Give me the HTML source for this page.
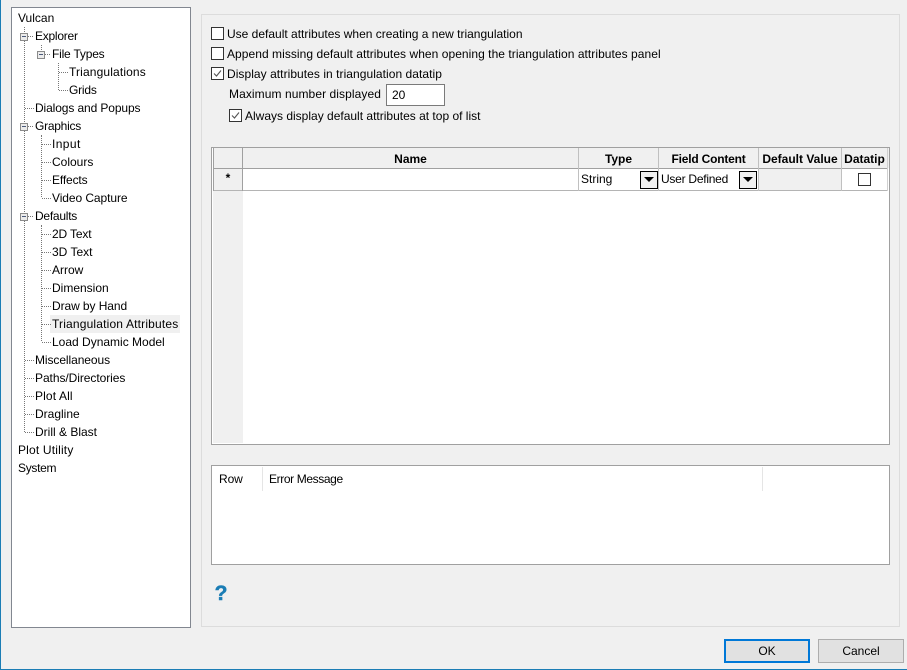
<!DOCTYPE html>
<html><head><meta charset="utf-8">
<style>
html,body{margin:0;padding:0}
body{width:907px;height:670px;position:relative;overflow:hidden;background:#f0f0f0;font-family:"Liberation Sans",sans-serif;font-size:12px;color:#000}
.a{position:absolute;box-sizing:border-box}
.t{position:absolute;white-space:nowrap;line-height:16px;height:16px}
.cb{position:absolute;width:13px;height:13px;box-sizing:border-box;border:1px solid #333;background:#fff}
.cb svg{position:absolute;left:0;top:0}
.v{position:absolute;width:1px;border-left:1px dotted #777}
.h{position:absolute;height:1px;border-top:1px dotted #777}
.ex{position:absolute;width:8px;height:8px;box-sizing:border-box;border:1px solid #8a8a8a;background:#ececec}
.ex:after{content:"";position:absolute;left:1px;top:2px;width:4px;height:1px;background:#4a5a7a}
.hd{font-weight:bold;text-align:center}
.dd{position:absolute;width:18px;height:18px;box-sizing:border-box;border:1px solid #000;background:#f0f0f0}
.dd:after{content:"";position:absolute;left:3px;top:5px;border-left:5px solid transparent;border-right:5px solid transparent;border-top:5px solid #000}
</style></head><body>
<div class="a" style="left:0;top:0;width:1px;height:670px;background:#1b7db5"></div>
<div class="a" style="left:0;top:669px;width:907px;height:1px;background:#1b7db5"></div>

<div class="a" style="left:11px;top:7px;width:180px;height:621px;background:#fff;border:1px solid #828790"></div>
<div class="a" style="left:50px;top:315px;width:130px;height:18px;background:#f0f0f0"></div>

<div class="v" style="left:24px;top:27px;height:405px"></div>
<div class="v" style="left:41px;top:45px;height:9px"></div>
<div class="v" style="left:41px;top:225px;height:116px"></div>
<div class="v" style="left:41px;top:135px;height:62px"></div>
<div class="v" style="left:58px;top:63px;height:27px"></div>
<div class="h" style="left:28px;top:36px;width:5px"></div>
<div class="h" style="left:45px;top:54px;width:5px"></div>
<div class="h" style="left:59px;top:72px;width:9px"></div>
<div class="h" style="left:59px;top:90px;width:9px"></div>
<div class="h" style="left:25px;top:108px;width:9px"></div>
<div class="h" style="left:28px;top:126px;width:5px"></div>
<div class="h" style="left:42px;top:144px;width:9px"></div>
<div class="h" style="left:42px;top:162px;width:9px"></div>
<div class="h" style="left:42px;top:180px;width:9px"></div>
<div class="h" style="left:42px;top:198px;width:9px"></div>
<div class="h" style="left:28px;top:216px;width:5px"></div>
<div class="h" style="left:42px;top:234px;width:9px"></div>
<div class="h" style="left:42px;top:252px;width:9px"></div>
<div class="h" style="left:42px;top:270px;width:9px"></div>
<div class="h" style="left:42px;top:288px;width:9px"></div>
<div class="h" style="left:42px;top:306px;width:9px"></div>
<div class="h" style="left:42px;top:324px;width:9px"></div>
<div class="h" style="left:42px;top:342px;width:9px"></div>
<div class="h" style="left:25px;top:360px;width:9px"></div>
<div class="h" style="left:25px;top:378px;width:9px"></div>
<div class="h" style="left:25px;top:396px;width:9px"></div>
<div class="h" style="left:25px;top:414px;width:9px"></div>
<div class="h" style="left:25px;top:432px;width:9px"></div>
<div class="ex" style="left:20px;top:33px"></div>
<div class="ex" style="left:37px;top:51px"></div>
<div class="ex" style="left:20px;top:123px"></div>
<div class="ex" style="left:20px;top:213px"></div>

<div class="t" style="left:18px;top:10px">Vulcan</div>
<div class="t" style="left:35px;top:28px;letter-spacing:-.25px">Explorer</div>
<div class="t" style="left:52px;top:46px;letter-spacing:-.2px">File Types</div>
<div class="t" style="left:69px;top:64px;letter-spacing:.14px">Triangulations</div>
<div class="t" style="left:69px;top:82px;letter-spacing:-.2px">Grids</div>
<div class="t" style="left:35px;top:100px;letter-spacing:-.11px">Dialogs and Popups</div>
<div class="t" style="left:35px;top:118px;letter-spacing:-.25px">Graphics</div>
<div class="t" style="left:52px;top:136px;letter-spacing:.4px">Input</div>
<div class="t" style="left:52px;top:154px">Colours</div>
<div class="t" style="left:52px;top:172px;letter-spacing:-.14px">Effects</div>
<div class="t" style="left:52px;top:190px;letter-spacing:-.08px">Video Capture</div>
<div class="t" style="left:35px;top:208px;letter-spacing:-.25px">Defaults</div>
<div class="t" style="left:52px;top:226px;letter-spacing:-.14px">2D Text</div>
<div class="t" style="left:52px;top:244px">3D Text</div>
<div class="t" style="left:52px;top:262px">Arrow</div>
<div class="t" style="left:52px;top:280px">Dimension</div>
<div class="t" style="left:52px;top:298px;letter-spacing:-.08px">Draw by Hand</div>
<div class="t" style="left:52px;top:316px;letter-spacing:.17px">Triangulation Attributes</div>
<div class="t" style="left:52px;top:334px">Load Dynamic Model</div>
<div class="t" style="left:35px;top:352px;letter-spacing:-.08px">Miscellaneous</div>
<div class="t" style="left:35px;top:370px;letter-spacing:-.06px">Paths/Directories</div>
<div class="t" style="left:35px;top:388px;letter-spacing:.12px">Plot All</div>
<div class="t" style="left:35px;top:406px">Dragline</div>
<div class="t" style="left:35px;top:424px">Drill &amp; Blast</div>
<div class="t" style="left:18px;top:442px;letter-spacing:.18px">Plot Utility</div>
<div class="t" style="left:18px;top:460px;letter-spacing:-.3px">System</div>

<div class="a" style="left:201px;top:14px;width:699px;height:613px;border:1px solid #dcdcdc;background:#f0f0f0"></div>

<div class="cb" style="left:211px;top:27px"></div>
<div class="t" style="left:227px;top:26px">Use default attributes when creating a new triangulation</div>
<div class="cb" style="left:211px;top:47px"></div>
<div class="t" style="left:227px;top:46px;letter-spacing:.05px">Append missing default attributes when opening the triangulation attributes panel</div>
<div class="cb" style="left:211px;top:67px"><svg width="11" height="11"><path d="M2 5.5L4.5 8L9 2.5" fill="none" stroke="#555" stroke-width="1.1"/></svg></div>
<div class="t" style="left:227px;top:66px;letter-spacing:.05px">Display attributes in triangulation datatip</div>
<div class="t" style="left:229px;top:86px;letter-spacing:.08px">Maximum number displayed</div>
<div class="a" style="left:386px;top:84px;width:59px;height:22px;background:#fff;border:1px solid #7a7a7a;padding-left:5px;line-height:20px">20</div>
<div class="cb" style="left:229px;top:109px"><svg width="11" height="11"><path d="M2 5.5L4.5 8L9 2.5" fill="none" stroke="#555" stroke-width="1.1"/></svg></div>
<div class="t" style="left:245px;top:108px">Always display default attributes at top of list</div>

<div class="a" style="left:211px;top:147px;width:679px;height:298px;background:#fff;border:1px solid #a0a0a0"></div>
<div class="a" style="left:213px;top:190px;width:30px;height:253px;background:#f0f0f0"></div>
<div class="a" style="left:213px;top:148px;width:676px;height:20px;background:#f0f0f0"></div>
<div class="a" style="left:213px;top:169px;width:29px;height:21px;background:#f0f0f0"></div>
<div class="a" style="left:759px;top:169px;width:82px;height:21px;background:#f0f0f0"></div>
<div class="a" style="left:213px;top:168px;width:675px;height:1px;background:#a0a0a0"></div>
<div class="a" style="left:213px;top:190px;width:675px;height:1px;background:#b4b4b4"></div>
<div class="a" style="left:213px;top:148px;width:1px;height:43px;background:#a0a0a0"></div>
<div class="a" style="left:242px;top:148px;width:1px;height:43px;background:#a0a0a0"></div>
<div class="a" style="left:578px;top:148px;width:1px;height:43px;background:#c0c0c0"></div>
<div class="a" style="left:658px;top:148px;width:1px;height:43px;background:#c0c0c0"></div>
<div class="a" style="left:758px;top:148px;width:1px;height:43px;background:#c0c0c0"></div>
<div class="a" style="left:841px;top:148px;width:1px;height:43px;background:#c0c0c0"></div>
<div class="a" style="left:887px;top:148px;width:1px;height:43px;background:#d0d0d0"></div>
<div class="t hd" style="left:243px;top:151px;width:335px">Name</div>
<div class="t hd" style="left:579px;top:151px;width:79px">Type</div>
<div class="t hd" style="left:659px;top:151px;width:99px;letter-spacing:-.2px">Field Content</div>
<div class="t hd" style="left:759px;top:151px;width:82px">Default Value</div>
<div class="t hd" style="left:842px;top:151px;width:45px">Datatip</div>
<div class="t" style="left:214px;top:170px;width:28px;text-align:center;font-weight:bold">*</div>
<div class="t" style="left:581px;top:171px">String</div>
<div class="dd" style="left:640px;top:171px"></div>
<div class="t" style="left:661px;top:171px;letter-spacing:-.25px">User Defined</div>
<div class="dd" style="left:739px;top:171px"></div>
<div class="cb" style="left:858px;top:173px"></div>

<div class="a" style="left:211px;top:465px;width:679px;height:100px;background:#fff;border:1px solid #a0a0a0"></div>
<div class="t" style="left:219px;top:471px;letter-spacing:-.1px">Row</div>
<div class="a" style="left:262px;top:467px;width:1px;height:24px;background:#e5e5e5"></div>
<div class="t" style="left:269px;top:471px;letter-spacing:-.38px">Error Message</div>
<div class="a" style="left:762px;top:467px;width:1px;height:24px;background:#e5e5e5"></div>

<div class="t" style="left:213px;top:583px;width:16px;height:22px;line-height:22px;font-size:21px;font-weight:bold;color:#1b7db5;text-align:center;-webkit-text-stroke:.5px #1b7db5">?</div>

<div class="a" style="left:724px;top:639px;width:86px;height:24px;background:#e1e1e1;border:2px solid #0078d7;text-align:center;line-height:20px">OK</div>
<div class="a" style="left:818px;top:639px;width:86px;height:24px;background:#e1e1e1;border:1px solid #adadad;text-align:center;line-height:22px">Cancel</div>
</body></html>
